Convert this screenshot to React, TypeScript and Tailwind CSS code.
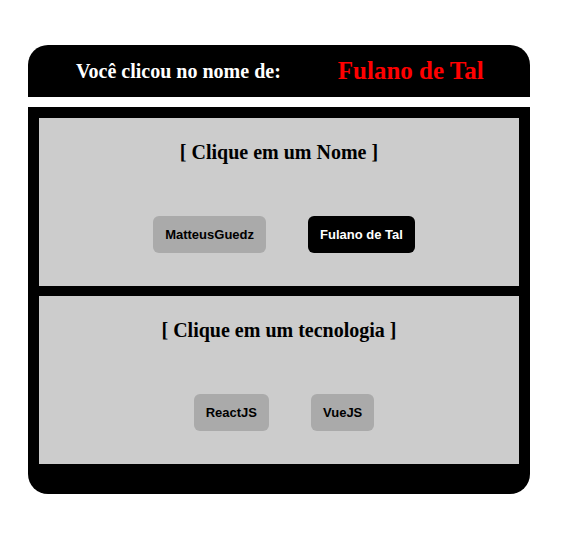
import { useState } from 'react';

const nomes = ['MatteusGuedz', 'Fulano de Tal'];
const techs = ['ReactJS', 'VueJS'];

function Botao({ label, ativo, onClick }: { label: string; ativo: boolean; onClick: () => void }) {
  return (
    <button
      onClick={onClick}
      className={`h-[37px] px-[12px] rounded-[6px] text-[13px] font-bold font-['Liberation_Sans',Arial,sans-serif] ${
        ativo ? 'bg-black text-white' : 'bg-[#aaaaaa] text-black'
      }`}
    >
      {label}
    </button>
  );
}

function Painel({
  titulo,
  itens,
  selecionado,
  onSelect,
}: {
  titulo: string;
  itens: string[];
  selecionado: string;
  onSelect: (v: string) => void;
}) {
  return (
    <div className="h-[168px] bg-[#cccccc] flex flex-col items-center pt-[21px]">
      <h2 className="text-[20px] font-bold leading-[26px] font-['Liberation_Serif','Times_New_Roman',serif]">
        {titulo}
      </h2>
      <div className="mt-[51px] pl-[10px] flex gap-[42px]">
        {itens.map((i) => (
          <Botao key={i} label={i} ativo={i === selecionado} onClick={() => onSelect(i)} />
        ))}
      </div>
    </div>
  );
}

export default function App() {
  const [nome, setNome] = useState('Fulano de Tal');
  const [tech, setTech] = useState('');

  return (
    <div className="w-[564px] h-[536px] bg-white pt-[45px] pl-[28px] font-['Liberation_Serif','Times_New_Roman',serif]">
      <div className="w-[502px]">
        <header className="h-[52px] bg-black rounded-t-[20px] flex items-center">
          <span className="ml-[48px] text-white text-[20px] font-bold">Você clicou no nome de:</span>
          <span className="ml-[57px] text-[#ff0000] text-[25px] font-bold">{nome}</span>
        </header>
        <div className="mt-[10px] bg-black rounded-b-[20px] p-[11px] pb-[30px] flex flex-col gap-[10px]">
          <Painel titulo="[ Clique em um Nome ]" itens={nomes} selecionado={nome} onSelect={setNome} />
          <Painel titulo="[ Clique em um tecnologia ]" itens={techs} selecionado={tech} onSelect={setTech} />
        </div>
      </div>
    </div>
  );
}
